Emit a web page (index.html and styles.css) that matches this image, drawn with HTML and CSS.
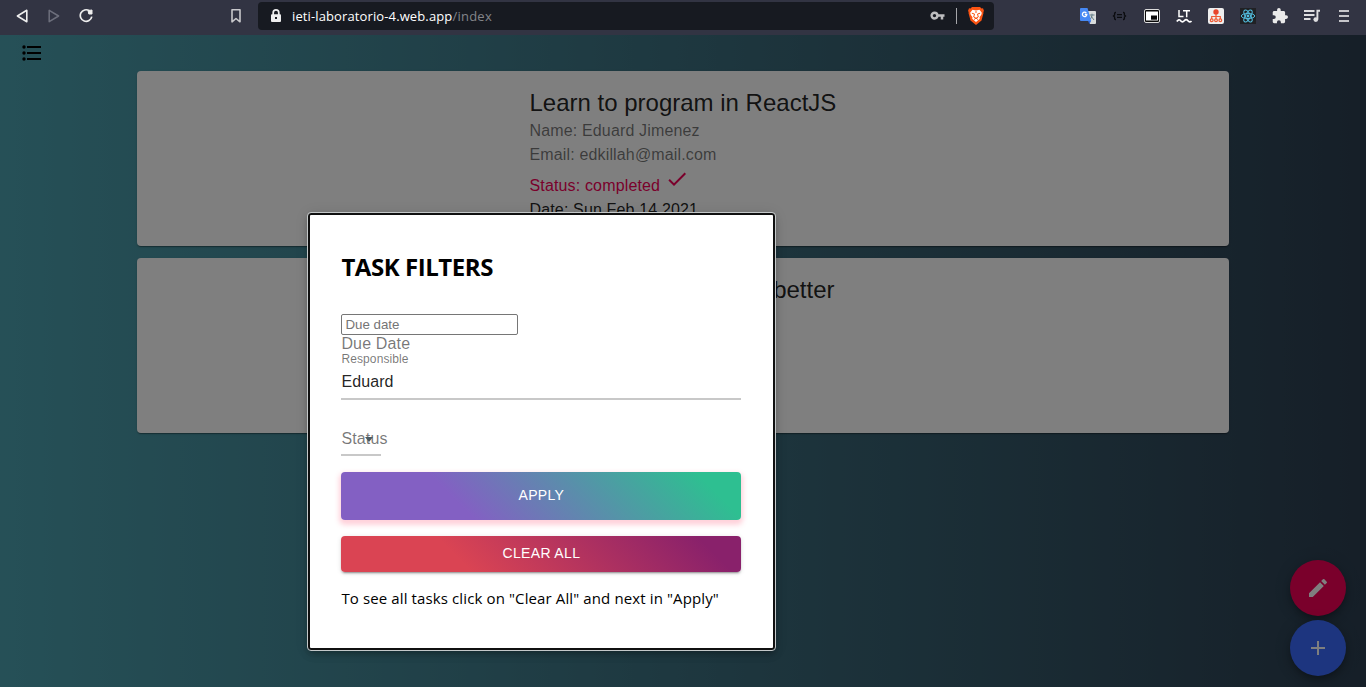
FILE: index.html
```html
<!DOCTYPE html>
<html lang="en">
<head>
<meta charset="utf-8">
<title>Task planner</title>
<link rel="stylesheet" href="styles.css">
</head>
<body>
<header class="browser">
  <div class="nav">
    <svg width="14" height="16" viewBox="0 0 14 16"><path d="M11.800 2.300v11.400L2.400 8z" fill="none" stroke="#eee" stroke-width="1.600" stroke-linejoin="round"/></svg>
    <svg width="14" height="16" viewBox="0 0 14 16"><path d="M2.200 2.300v11.400L11.600 8z" fill="none" stroke="#6d6f7c" stroke-width="1.500" stroke-linejoin="round"/></svg>
    <svg width="16" height="16" viewBox="0 0 16 16"><path d="M10.400 2.800A5.800 5.800 0 1 0 12.800 8.700" fill="none" stroke="#eee" stroke-width="1.700"/><path d="M9 2.500 13 2v4H9.800z" fill="#eee" stroke="#eee" stroke-linejoin="round"/></svg>
  </div>
  <svg class="bookmark" width="10" height="14" viewBox="0 0 10 14"><path d="M1 .8h8v12L5 9.500 1 12.800z" fill="none" stroke="#c8c8cb" stroke-width="1.600" stroke-linejoin="round"/></svg>
  <div class="address">
    <svg class="lock" width="12" height="14" viewBox="0 0 12 14"><path d="M3.200 6V3.700a2.800 2.800 0 0 1 5.600 0V6" fill="none" stroke="#eee" stroke-width="1.700"/><path fill="#eee" d="M2 5.300h8q1 0 1 1v5.600q0 1-1 1H2q-1 0-1-1V6.300q0-1 1-1z"/><path fill="#171a21" d="M5 8h2v2H5z"/></svg>
    <span class="url">ieti-laboratorio-4.web.app</span><span class="path">/index</span>
    <svg class="key" width="15" height="10" viewBox="0 0 15 10"><path fill="none" stroke="#bdbdbf" stroke-width="2.400" d="M4.500 1.700a2.900 2.900 0 1 0 0 5.800 2.900 2.900 0 0 0 0-5.800z"/><path d="M7 4.600h7.500M12 5v3.500" stroke="#bdbdbf" stroke-width="2.500"/></svg>
    <i class="divider"></i>
    <svg width="16" height="18" viewBox="0 0 16 18"><path fill="#fb5412" d="M4 0h8l1.500 1.500L15 1.300 16 4l-.7 1 .2 1-2 7.500L8 18l-5.500-4.500L.5 6l.2-1L0 4l1-2.700 1.500.2z"/><path fill="#fff" d="M4.500 2.800 8 3.400l3.500-.6 2.300 3-.5 2-1.800 2.500.3 1.400L8 15l-3.800-3.300.3-1.400-1.800-2.500-.5-2z"/><path d="M3.800 6.200 6.500 7l-.8 3L8 11.200l2.300-1.200-.8-3 2.700-.8M6 12.500l2-1.300 2 1.300M8 4v2" stroke="#fb5412" fill="none" stroke-width="1"/></svg>
  </div>
  <div class="extensions">
    <svg width="16" height="16" viewBox="0 0 16 16"><path fill="#d9dcdc" d="M6 3h9q1 0 1 1v11q0 1-1 1h-5z"/><path d="M9.500 7h5M12 5.700V7c0 2.500-1.500 4-3 5m2-4 3 4" stroke="#647f88" fill="none"/><path fill="#3367d6" d="m8 13 3 0-1.500 3z"/><path fill="#4688f4" d="M1 0h6.500l3.700 13H1q-1 0-1-1V1q0-1 1-1z"/><path d="M6.300 5A2.200 2.200 0 1 0 6.800 6.500H4.800" stroke="#fff" stroke-width="1.300" fill="none"/></svg>
    <svg width="16" height="16" viewBox="0 0 16 16"><path d="M4 4.500H3.500q-.9 0-.9.900v1.600L1.500 8l1.100 1v1.600q0 .9.900.9H4M11 4.500h.5q.9 0 .9.900v1.600L13.500 8l-1.100 1v1.600q0 .9-.9.900H11M5 6.700h5M5 9.300h5" stroke="#0b0c10" stroke-width="1.300" fill="none"/></svg>
    <svg width="16" height="16" viewBox="0 0 16 16"><rect x=".5" y="1.500" width="15" height="13" rx="1.500" fill="#090909" stroke="#ddd"/><path fill="#fff" d="M2 3.500h12v9H2z"/><path fill="#090909" d="M7 7.500h6v4.200H7z"/></svg>
    <svg width="16" height="16" viewBox="0 0 16 16"><path d="M3 2v6.500h4.500M7 2.800H14M10.700 2.800V9.300" stroke="#fff" stroke-width="1.500" fill="none"/><path d="M.8 13.500q2-3 3.800-.8t3.700 0 3.600 0 3.600.3" stroke="#fff" stroke-width="1.700" fill="none"/></svg>
    <svg width="16" height="16" viewBox="0 0 16 16"><rect width="16" height="16" rx="2" fill="#eee"/><circle cx="8" cy="4" r="2.700" fill="#e8452b"/><path d="M8 6v5M3.700 11V8.500h8.600V11" stroke="#ef5b35" stroke-width="1.200" fill="none"/><g fill="none" stroke="#ef5b35" stroke-width="1.200"><circle cx="3.700" cy="12.300" r="1.400"/><circle cx="8" cy="12.300" r="1.400"/><circle cx="12.300" cy="12.300" r="1.400"/></g></svg>
    <svg width="16" height="16" viewBox="0 0 16 16"><path fill="#202124" d="M0 0h16v16H0z"/><g fill="none" stroke="#53bfe0" stroke-width="1"><ellipse cx="8" cy="8" rx="6.700" ry="2.600"/><ellipse cx="8" cy="8" rx="6.700" ry="2.600" transform="rotate(60 8 8)"/><ellipse cx="8" cy="8" rx="6.700" ry="2.600" transform="rotate(120 8 8)"/></g><circle cx="8" cy="8" r="1.400" fill="#53bfe0"/></svg>
    <svg width="16" height="16" viewBox="1 1 22 22"><path fill="#eaeaea" d="M20.500 11H19V7c0-1.100-.9-2-2-2h-4V3.500a2.500 2.500 0 0 0-5 0V5H4c-1.100 0-2 .9-2 2v3.800h1.500a2.700 2.700 0 0 1 0 5.400H2V20c0 1.100.9 2 2 2h3.800v-1.500a2.700 2.700 0 0 1 5.400 0V22H17c1.100 0 2-.9 2-2v-4h1.500a2.500 2.500 0 0 0 0-5z"/></svg>
    <svg width="16" height="16" viewBox="0 0 16 16"><path d="M0 3h10.500M0 7h10.500M0 11h6.500" stroke="#dedee0" stroke-width="1.800"/><path d="M16 2.800h-2.600v8.500" stroke="#dedee0" stroke-width="1.900" fill="none"/><circle cx="11.800" cy="11.600" r="2.400" fill="#dedee0"/></svg>
    <svg width="16" height="16" viewBox="0 0 16 16"><path d="M3 3h10M3 8h10M3 13h10" stroke="#c6c6ca" stroke-width="2"/></svg>
  </div>
</header>
<main class="page">
  <svg class="menu" width="20" height="16" viewBox="0 0 20 16"><path d="M5 2h14M5 8h14M5 14h14" stroke="#000" stroke-width="2"/><circle cx="2" cy="2" r="1.700"/><circle cx="2" cy="8" r="1.700"/><circle cx="2" cy="14" r="1.700"/></svg>
  <section class="cards">
    <article class="card">
      <div class="content">
        <h5 class="title">Learn to program in ReactJS</h5>
        <p class="line muted">Name: Eduard Jimenez</p>
        <p class="line muted">Email: edkillah@mail.com</p>
        <p class="line status">Status: completed <svg width="24" height="24" viewBox="0 0 24 24"><path fill="currentColor" d="M9 16.200 4.800 12l-1.400 1.400L9 19 21 7l-1.400-1.400z"/></svg></p>
        <p class="line">Date: Sun Feb 14 2021</p>
      </div>
    </article>
    <article class="card">
      <div class="content">
        <h5 class="title trailing">better</h5>
      </div>
    </article>
  </section>
  <div class="fabs">
    <span class="fab edit"><svg width="24" height="24" viewBox="0 0 24 24"><path fill="#fff" d="M3 17.250V21h3.750L17.810 9.940l-3.750-3.750zM20.710 7.040a1 1 0 0 0 0-1.410l-2.340-2.340a1 1 0 0 0-1.410 0l-1.830 1.830 3.750 3.750z"/></svg></span>
    <span class="fab add"><svg width="24" height="24" viewBox="0 0 24 24"><path fill="#fff" d="M19 13h-6v6h-2v-6H5v-2h6V5h2v6h6z"/></svg></span>
  </div>
  <div class="backdrop"></div>
  <section class="modal">
    <h2 class="heading">TASK FILTERS</h2>
    <input class="date" type="text" placeholder="Due date">
    <div class="label">Due Date</div>
    <div class="small">Responsible</div>
    <div class="field">Eduard</div>
    <div class="select"><span>Status</span><svg class="arrow" width="8" height="5" viewBox="0 0 8 5"><path fill="#4c5a61" d="M0 0h8L4 5z"/></svg></div>
    <button class="btn apply">APPLY</button>
    <button class="btn clear">CLEAR ALL</button>
    <p class="hint">To see all tasks click on "Clear All" and next in "Apply"</p>
  </section>
</main>
</body>
</html>
```
FILE: styles.css
```css
* { box-sizing: border-box; }
body {
  margin: 0;
  height: 687px;
  display: flex;
  flex-direction: column;
  overflow: hidden;
  font-family: "Liberation Sans", Arial, sans-serif;
}
h2, h5, p { margin: 0; }
svg { display: block; flex: none; }

/* Browser toolbar */
.browser {
  height: 35px;
  flex: none;
  display: flex;
  align-items: center;
  padding: 0 14px 3px 15px;
  background: #323443;
}
.nav { display: flex; gap: 18px; width: 216px; }
.bookmark { margin-right: 17px; }
.address {
  width: 736px;
  height: 28px;
  display: flex;
  align-items: center;
  padding: 0 10px 0 12px;
  border-radius: 4px;
  background: #171a21;
  font: 13px/28px "Open Sans", sans-serif;
  color: #fff;
}
.lock { margin-right: 10px; }
.path { color: #83858a; flex: 1; letter-spacing: .25px; }
.url { letter-spacing: .12px; }
.key { margin-right: 11px; }
.divider { width: 1px; height: 16px; background: #a5a6aa; margin-right: 11px; }
.extensions { display: flex; gap: 16px; margin-left: auto; }

/* Planner page */
.page {
  flex: 1;
  position: relative;
  padding: 10px 0 0 22px;
  background: linear-gradient(to right, #4ca1af, #2c3e50);
}
.cards {
  display: flex;
  flex-direction: column;
  gap: 12px;
  width: 1092px;
  margin: 10px 0 0 115px;
}
.card {
  height: 175px;
  padding: 16px 0 0 392.500px;
  border-radius: 4px;
  background: #fff;
  box-shadow: 0 2px 1px -1px rgba(0,0,0,.2), 0 1px 1px rgba(0,0,0,.14), 0 1px 3px rgba(0,0,0,.12);
}
.content { width: 305px; color: rgba(0,0,0,.87); }
.title { font-size: 24px; font-weight: 400; line-height: 32px; white-space: nowrap; }
.trailing { text-align: right; }
.line { font-size: 16px; line-height: 24px; letter-spacing: .15px; }
.muted { color: rgba(0,0,0,.54); }
.status { display: flex; align-items: flex-end; gap: 5px; height: 31px; color: #f50057; }
.status svg { margin-bottom: 7px; }
.fabs {
  position: absolute;
  right: 20px;
  bottom: 11px;
  display: flex;
  flex-direction: column;
  gap: 4px;
}
.fab {
  width: 56px;
  height: 56px;
  border-radius: 50%;
  display: grid;
  place-items: center;
  box-shadow: 0 3px 5px -1px rgba(0,0,0,.2), 0 6px 10px rgba(0,0,0,.14), 0 1px 18px rgba(0,0,0,.12);
}
.edit { background: #f50057; }
.add { background: #3b6bff; }
.backdrop { position: absolute; inset: 0; background: rgba(0,0,0,.5); }

/* Filter dialog */
.modal {
  position: absolute;
  left: 308px;
  top: 178px;
  width: 467px;
  height: 437px;
  padding: 36px 31px 0 31.400px;
  border: 2px solid #101010;
  border-radius: 3px;
  outline: 1px solid #c4c8c9;
  background: #fff;
  box-shadow: 0 3px 5px -1px rgba(0,0,0,.2), 0 5px 8px rgba(0,0,0,.14), 0 1px 14px rgba(0,0,0,.12);
}
.heading { font: bold 24px/32px "Open Sans", sans-serif; height: 63px; letter-spacing: -.45px; }
.date {
  display: block;
  width: 177px;
  height: 21px;
  margin: 0;
  padding: 1px 3px;
  border: 1px solid #767676;
  border-radius: 2px;
  font: 13.333px "Liberation Sans", Arial, sans-serif;
}
.date::placeholder { color: #757575; }
.label { padding-top: 1px; font-size: 16px; line-height: 16px; letter-spacing: .15px; color: rgba(0,0,0,.54); }
.small { font-size: 12px; line-height: 15px; letter-spacing: .11px; color: rgba(0,0,0,.54); }
.field {
  height: 33px;
  border-bottom: 2px solid #c8c8c8;
  font-size: 16px;
  line-height: 29px;
  letter-spacing: .1px;
  color: rgba(0,0,0,.87);
  width: 400px;
}
.select {
  position: relative;
  width: 40px;
  height: 32px;
  margin: 24px 0 15.500px;
  border-bottom: 2px solid #c8c8c8;
  font-size: 16px;
  line-height: 29px;
  letter-spacing: .15px;
  color: rgba(0,0,0,.54);
}
.arrow { position: absolute; left: 24px; top: 13px; }
.btn {
  display: block;
  width: 400px;
  margin: 0 0 16px;
  padding: 0 0 1px;
  border: 0;
  border-radius: 4px;
  font: 14px "Liberation Sans", Arial, sans-serif;
  letter-spacing: .35px;
  color: #fff;
}
.apply {
  height: 48px;
  background: linear-gradient(45deg, #8360c3 30%, #2ebf91 90%);
  box-shadow: 0 3px 5px 2px rgba(255,105,135,.3);
}
.clear {
  height: 36px;
  background: linear-gradient(45deg, #da4453 30%, #89216b 90%);
  box-shadow: 0 3px 1px -2px rgba(0,0,0,.2), 0 2px 2px rgba(0,0,0,.14), 0 1px 5px rgba(0,0,0,.12);
}
.hint { margin-top: -1px; font: 15px/22px "Open Sans", sans-serif; letter-spacing: .12px; white-space: nowrap; }
```
